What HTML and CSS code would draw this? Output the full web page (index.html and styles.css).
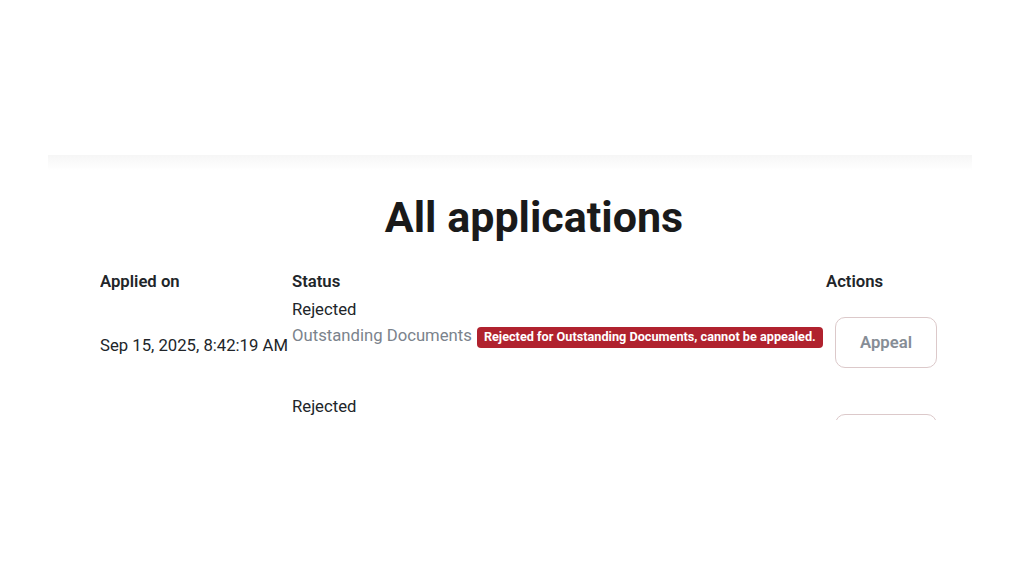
FILE: index.html
```html
<!DOCTYPE html>
<html lang="en">
<head>
    <meta charset="UTF-8">
    <meta name="viewport" content="width=device-width, initial-scale=1.0">
    <title>All applications</title>
    <link rel="stylesheet" href="styles.css">
</head>
<body>
    <div class="page">
        <!-- 上部バーの影 -->
        <div class="topbar-shadow"></div>

        <div class="content">
            <h1>All applications</h1>

            <div class="app-list">
                <div class="app-row app-head">
                    <div class="col-date">Applied on</div>
                    <div class="col-status">Status</div>
                    <div class="col-actions">Actions</div>
                </div>

                <div class="app-row">
                    <div class="col-date">Sep 15, 2025, 8:42:19 AM</div>
                    <div class="col-status">
                        <div>Rejected</div>
                        <div class="reason">
                            <span class="reason-text">Outstanding Documents</span>
                            <span class="badge">Rejected for Outstanding Documents, cannot be appealed.</span>
                        </div>
                    </div>
                    <div class="col-actions">
                        <button class="btn-appeal" disabled>Appeal</button>
                    </div>
                </div>

                <div class="app-row">
                    <div class="col-date"></div>
                    <div class="col-status">
                        <div>Rejected</div>
                    </div>
                    <div class="col-actions">
                        <button class="btn-appeal" disabled>Appeal</button>
                    </div>
                </div>
            </div>
        </div>
    </div>
</body>
</html>
```

FILE: styles.css
```css
body {
    margin: 0;
    background-color: #ffffff;
    font-family: Roboto, "Liberation Sans", Arial, sans-serif;
    color: #212529;
}
.page {
    padding-top: 155px;
}
.topbar-shadow {
    margin: 0 52px 0 48px;
    height: 15px;
    background: linear-gradient(#f6f6f6, #fbfbfb 60%, #ffffff);
}
.content {
    margin-left: 100px;
    width: 868px;
}
h1 {
    font-size: 43px;
    font-weight: 700;
    color: #1a1a1a;
    text-align: center;
    margin: 21px 0 26px;
    line-height: 52px;
}

/* 一覧（下端で切れる） */
.app-list {
    height: 151px;
    overflow: hidden;
    font-size: 16.7px;
}
.app-row {
    display: grid;
    grid-template-columns: 192px 534px 120px;
    min-height: 97px;
}
.app-head {
    min-height: 0;
    font-weight: 600;
    line-height: 25px;
    margin-bottom: 3px;
}
.col-date {
    align-self: center;
}
.app-head .col-date {
    align-self: start;
}
.col-status {
    line-height: 25px;
}
.reason {
    display: flex;
    align-items: center;
    gap: 5px;
    margin-top: 1px;
}
.reason-text {
    color: #7b838c;
}
.badge {
    background-color: #b0222e;
    color: #ffffff;
    font-size: 12.7px;
    font-weight: 700;
    line-height: 16px;
    padding: 2px 7px 3px;
    border-radius: 4px;
    margin-top: 3px;
}
.btn-appeal {
    margin: 20px 0 0 9px;
    width: 102px;
    height: 51px;
    background-color: #ffffff;
    border: 1px solid #dcc9ca;
    border-radius: 10px;
    font-family: inherit;
    font-size: 16.7px;
    font-weight: 600;
    color: #868d96;
}
```
